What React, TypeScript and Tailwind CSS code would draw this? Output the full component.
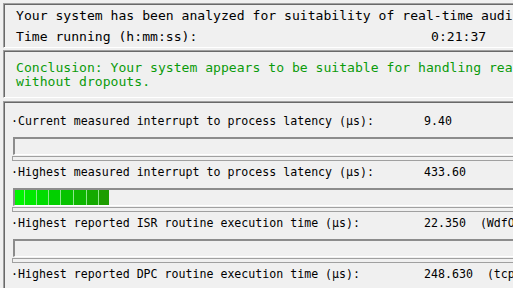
import React from "react";

const rows = [
  { label: "·Current measured interrupt to process latency (µs):", value: "9.40", level: 0 },
  { label: "·Highest measured interrupt to process latency (µs):", value: "433.60", level: 8 },
  { label: "·Highest reported ISR routine execution time (µs):", value: "22.350", driver: "(WdfO1000.sys - Kernel Mode Driver Framework)", level: 0 },
  { label: "·Highest reported DPC routine execution time (µs):", value: "248.630", driver: "(tcpip.sys - TCP/IP Driver)", level: 0 },
];

const segments = [
  { w: 9, c: "#00f400" },
  { w: 11, c: "#00e800" },
  { w: 11, c: "#00dc00" },
  { w: 11, c: "#02d000" },
  { w: 12, c: "#07c300" },
  { w: 12, c: "#0db700" },
  { w: 11, c: "#14aa00" },
  { w: 10, c: "#1d9d00" },
];

function Meter({ level }: { level: number }) {
  return (
    <div className="ml-[9px] mt-[5px] h-[18px] border-t-2 border-l-2 border-[#8c8c8c] border-b border-b-white bg-[#f0f0f0]">
      {level > 0 && (
        <div className="inline-flex h-full gap-px bg-[#8fe68f]">
          {segments.slice(0, level).map((s, i) => (
            <div key={i} className="h-full" style={{ width: s.w, background: s.c }} />
          ))}
        </div>
      )}
    </div>
  );
}

export default function App() {
  return (
    <div className="w-[513px] h-[288px] overflow-hidden bg-[#f0f0f0] text-black font-['DejaVu_Sans_Mono',monospace] whitespace-nowrap">
      {/* summary */}
      <div className="ml-[3px] mt-[3px] w-[600px] border-t border-l border-[#a0a0a0] border-b border-b-white shadow-[inset_1px_1px_0_#696969] pl-[12px] pt-[1px] text-[13.1px] leading-[21px]">
        <div>Your system has been analyzed for suitability of real-time audio and other tasks.</div>
        <div className="flex">
          <span className="w-[415px] shrink-0">Time running (h:mm:ss):</span>
          <span>0:21:37</span>
        </div>
      </div>

      {/* conclusion */}
      <div className="ml-[3px] mt-[2px] w-[600px] border-t border-l border-[#a0a0a0] border-b border-b-white shadow-[inset_1px_1px_0_#696969] pl-[12px] pt-[10px] pb-[8px] text-[13.1px] leading-[14px] text-[#0b9b0b]">
        <div>Conclusion: Your system appears to be suitable for handling real-time audio and other tasks</div>
        <div>without dropouts.</div>
      </div>

      {/* measurements */}
      <div className="ml-[3px] mt-[3px] w-[600px] border-t border-l border-[#a0a0a0] shadow-[inset_1px_1px_0_#696969] pt-[10px] text-[11.6px]">
        {rows.map((r, i) => (
          <div key={i} className="mb-[2px]">
            <div className="flex h-[20px] items-center pl-[7px]">
              <span className="w-[413px] shrink-0">{r.label}</span>
              <span>{r.value}</span>
              {r.driver && <span className="ml-[14px]">{r.driver}</span>}
            </div>
            <Meter level={r.level} />
            <div className="ml-[8px] mt-px h-[5px] border border-[#a0a0a0] bg-[#f0f0f0]" />
          </div>
        ))}
      </div>
    </div>
  );
}
